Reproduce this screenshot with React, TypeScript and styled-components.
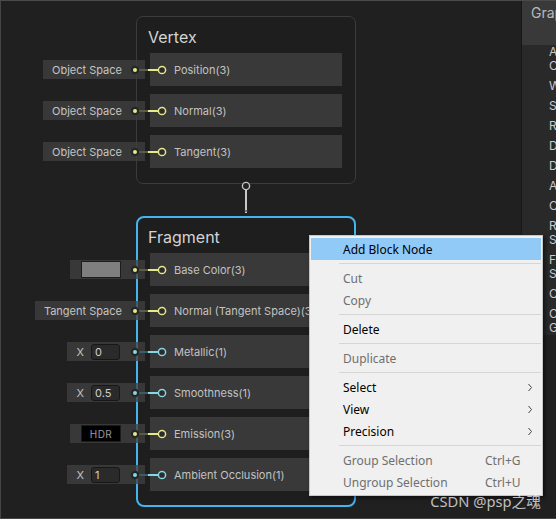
import React from "react";
import styled, { createGlobalStyle } from "styled-components";

const Global = createGlobalStyle`
  html, body { margin: 0; padding: 0; background: #202020; }
  #root { width: 556px; height: 519px; }
  * { box-sizing: border-box; }
`;

const YELLOW = "#e6e88c";
const YELLOW_DIM = "#5b5c48";
const CYAN = "#86d6e4";
const CYAN_DIM = "#3c5c64";

const Frame = styled.div`
  width: 556px;
  height: 519px;
  border-top: 1px solid #4a4a4a;
  border-left: 1px solid #454545;
  border-bottom: 1px solid #454545;
  background: #202020;
  display: flex;
  overflow: hidden;
`;

const Canvas = styled.div`
  position: relative;
  flex: 1;
  overflow: hidden;
  font-family: Inter, "Noto Sans", sans-serif;
`;

const Node = styled.div<{ $x: number; $y: number; $selected?: boolean }>`
  position: absolute;
  left: ${(p) => p.$x}px;
  top: ${(p) => p.$y}px;
  width: 220px;
  background: #1e1e1e;
  border: ${(p) => (p.$selected ? "2px solid #44b4f0" : "1px solid #3b3b3b")};
  border-radius: ${(p) => (p.$selected ? 8 : 7)}px;
  display: flex;
  flex-direction: column;
`;

const Title = styled.div<{ $selected?: boolean }>`
  height: ${(p) => (p.$selected ? 35 : 36)}px;
  padding: ${(p) => (p.$selected ? "3px 0 0 10px" : "4px 0 0 11px")};
  line-height: 32px;
  font-size: 16px;
  color: #d4d4d4;
`;

const Rows = styled.div<{ $selected?: boolean }>`
  display: flex;
  flex-direction: column;
  gap: 8px;
  padding: ${(p) => (p.$selected ? "0 12px 14px" : "0 13px 15px")};
`;

const Row = styled.div`
  position: relative;
  height: 33px;
  background: #393939;
  display: flex;
  align-items: center;
  padding-left: 24px;
  font-size: 11px;
  color: #c2c2c2;
  white-space: nowrap;
`;

const Stub = styled.div<{ $pl: number; $pr: number }>`
  position: absolute;
  right: calc(100% + 5px);
  top: 7px;
  height: 19px;
  display: flex;
  align-items: center;
  gap: 7px;
  padding: 0 ${(p) => p.$pr}px 0 ${(p) => p.$pl}px;
  background: rgba(64, 64, 64, 0.75);
  font-size: 11px;
  color: #c4c4c4;
  white-space: nowrap;
`;

const Swatch = styled.div<{ $hdr?: boolean }>`
  width: 40px;
  height: 17px;
  background: ${(p) => (p.$hdr ? "#000" : "#7f7f7f")};
  border: 1px solid #1c1c1c;
  display: flex;
  align-items: center;
  justify-content: center;
  font-size: 10px;
  color: #9c9c9c;
  letter-spacing: 0.5px;
`;

const FloatBox = styled.div`
  width: 29px;
  height: 16px;
  background: #2a2a2a;
  border: 1px solid #171717;
  border-radius: 3px;
  padding-left: 3px;
  line-height: 14px;
  font-size: 11px;
  color: #d0d0d0;
`;

const PortSvg = styled.svg`
  position: absolute;
  left: -22px;
  top: 10.5px;
  width: 40px;
  height: 12px;
`;

const EdgeSvg = styled.svg`
  position: absolute;
  left: 239px;
  top: 177px;
  width: 12px;
  height: 44px;
`;

const Menu = styled.div`
  position: absolute;
  left: 308px;
  top: 234px;
  width: 234px;
  padding: 2px 1px;
  background: #f0f0f0;
  border: 1px solid #c6c6c6;
  box-shadow: 2px 2px 4px rgba(0, 0, 0, 0.55);
  font-family: "Noto Sans", "Liberation Sans", sans-serif;
  font-size: 12px;
`;

const Item = styled.div<{ $active?: boolean; $disabled?: boolean }>`
  height: 22px;
  display: grid;
  grid-template-columns: 1fr 40px 10px;
  align-items: center;
  padding: 0 6px 0 32px;
  background: ${(p) => (p.$active ? "#91c9f7" : "transparent")};
  color: ${(p) => (p.$disabled ? "#6f6f6f" : "#000")};
  white-space: nowrap;
`;

const Shortcut = styled.span`
  color: #6f6f6f;
`;

const Sep = styled.div`
  height: 7px;
  display: flex;
  align-items: center;
  padding-left: 28px;
  &::after {
    content: "";
    flex: 1;
    height: 1px;
    background: #d6d6d6;
  }
`;

const Watermark = styled.div`
  position: absolute;
  right: 15px;
  bottom: 7px;
  font-family: "Noto Sans", "Noto Sans CJK SC", sans-serif;
  font-size: 14.7px;
  color: rgba(255, 255, 255, 0.72);
  white-space: nowrap;
`;

const Inspector = styled.div`
  position: absolute;
  top: 0;
  right: 0;
  width: 35px;
  height: 334px;
  background: #292929;
  border-left: 1px solid #171717;
  display: flex;
  flex-direction: column;
  overflow: hidden;
  font-family: Inter, "Noto Sans", sans-serif;
`;

const InspectorHeader = styled.div`
  height: 44px;
  flex: none;
  background: #393939;
  padding: 3px 0 0 9px;
  line-height: 18px;
  font-size: 14px;
  color: #b9b9b9;
  white-space: nowrap;
`;

const InspectorList = styled.div`
  margin-top: -3px;
  padding-left: 27px;
  width: 160px;
  font-size: 12px;
  color: #cacaca;
`;

const Prop = styled.div`
  padding: 3px 0;
  line-height: 14px;
  white-space: nowrap;
`;

type Kind = "yellow" | "cyan";

type StubSpec =
  | { type: "text"; text: string }
  | { type: "color" }
  | { type: "hdr" }
  | { type: "float"; value: string };

function Port({ kind }: { kind: Kind }) {
  const c = kind === "yellow" ? YELLOW : CYAN;
  const d = kind === "yellow" ? YELLOW_DIM : CYAN_DIM;
  return (
    <PortSvg viewBox="0 0 40 12">
      <line x1="10" y1="6" x2="20" y2="6" stroke={d} strokeWidth="2" />
      <line x1="20" y1="6" x2="30.5" y2="6" stroke={c} strokeWidth="2" />
      <circle cx="7" cy="6" r="4.2" fill="#262626" />
      <circle cx="7" cy="6" r="2" fill={c} />
      <circle cx="34" cy="6" r="3.6" fill="#2c2c2c" stroke={c} strokeWidth="1.5" />
    </PortSvg>
  );
}

function StubField({ spec }: { spec: StubSpec }) {
  if (spec.type === "text")
    return (
      <Stub $pl={9} $pr={23}>
        {spec.text}
      </Stub>
    );
  if (spec.type === "color")
    return (
      <Stub $pl={11} $pr={24}>
        <Swatch />
      </Stub>
    );
  if (spec.type === "hdr")
    return (
      <Stub $pl={11} $pr={24}>
        <Swatch $hdr>HDR</Swatch>
      </Stub>
    );
  return (
    <Stub $pl={9} $pr={25}>
      <span>X</span>
      <FloatBox>{spec.value}</FloatBox>
    </Stub>
  );
}

type Slot = { label: string; kind: Kind; stub: StubSpec };

const vertexSlots: Slot[] = [
  { label: "Position(3)", kind: "yellow", stub: { type: "text", text: "Object Space" } },
  { label: "Normal(3)", kind: "yellow", stub: { type: "text", text: "Object Space" } },
  { label: "Tangent(3)", kind: "yellow", stub: { type: "text", text: "Object Space" } },
];

const fragmentSlots: Slot[] = [
  { label: "Base Color(3)", kind: "yellow", stub: { type: "color" } },
  { label: "Normal (Tangent Space)(3)", kind: "yellow", stub: { type: "text", text: "Tangent Space" } },
  { label: "Metallic(1)", kind: "cyan", stub: { type: "float", value: "0" } },
  { label: "Smoothness(1)", kind: "cyan", stub: { type: "float", value: "0.5" } },
  { label: "Emission(3)", kind: "yellow", stub: { type: "hdr" } },
  { label: "Ambient Occlusion(1)", kind: "cyan", stub: { type: "float", value: "1" } },
];

function BlockNode({ title, slots, x, y, selected }: { title: string; slots: Slot[]; x: number; y: number; selected?: boolean }) {
  return (
    <Node $x={x} $y={y} $selected={selected}>
      <Title $selected={selected}>{title}</Title>
      <Rows $selected={selected}>
        {slots.map((s, i) => (
          <Row key={i}>
            <StubField spec={s.stub} />
            <Port kind={s.kind} />
            {s.label}
          </Row>
        ))}
      </Rows>
    </Node>
  );
}

function Chevron() {
  return (
    <svg width="10" height="9" viewBox="0 0 10 9">
      <path d="M3.5 1 L6.5 4.5 L3.5 8" fill="none" stroke="#444" strokeWidth="1" />
    </svg>
  );
}

const props: string[][] = [
  ["Allow Material", "Custom Editor"],
  ["Workflow Mode"],
  ["Surface Type"],
  ["Render Face"],
  ["Depth Write"],
  ["Depth Test"],
  ["Alpha Clipping"],
  ["Cast Shadows"],
  ["Receive", "Shadows"],
  ["Fragment Normal", "Space"],
  ["Clear Coat"],
  ["Override Baked", "GI"],
];

export default function App() {
  return (
    <>
      <Global />
      <Frame>
        <Canvas>
          <BlockNode title="Vertex" slots={vertexSlots} x={135} y={15} />
          <EdgeSvg viewBox="0 0 12 44">
            <line x1="6" y1="11" x2="6" y2="35" stroke="#c8c8c8" strokeWidth="2" />
            <circle cx="6" cy="8" r="3.6" fill="#222" stroke="#c4c4c4" strokeWidth="1.4" />
          </EdgeSvg>
          <BlockNode title="Fragment" slots={fragmentSlots} x={135} y={215} selected />
          <EdgeSvg viewBox="0 0 12 44" style={{ top: 208, height: 12 }}>
            <circle cx="6" cy="7" r="3.6" fill="#222" stroke="#c4c4c4" strokeWidth="1.4" />
          </EdgeSvg>
          <Inspector>
            <InspectorHeader>Graph Inspector</InspectorHeader>
            <InspectorList>
              {props.map((p, i) => (
                <Prop key={i}>
                  {p.map((l, j) => (
                    <div key={j}>{l}</div>
                  ))}
                </Prop>
              ))}
            </InspectorList>
          </Inspector>
          <Menu>
            <Item $active>
              <span>Add Block Node</span>
            </Item>
            <Sep />
            <Item $disabled>
              <span>Cut</span>
            </Item>
            <Item $disabled>
              <span>Copy</span>
            </Item>
            <Sep />
            <Item>
              <span>Delete</span>
            </Item>
            <Sep />
            <Item $disabled>
              <span>Duplicate</span>
            </Item>
            <Sep />
            <Item>
              <span>Select</span>
              <span />
              <Chevron />
            </Item>
            <Item>
              <span>View</span>
              <span />
              <Chevron />
            </Item>
            <Item>
              <span>Precision</span>
              <span />
              <Chevron />
            </Item>
            <Sep />
            <Item $disabled>
              <span>Group Selection</span>
              <Shortcut>Ctrl+G</Shortcut>
            </Item>
            <Item $disabled>
              <span>Ungroup Selection</span>
              <Shortcut>Ctrl+U</Shortcut>
            </Item>
          </Menu>
          <Watermark>CSDN @psp之魂</Watermark>
        </Canvas>
      </Frame>
    </>
  );
}
